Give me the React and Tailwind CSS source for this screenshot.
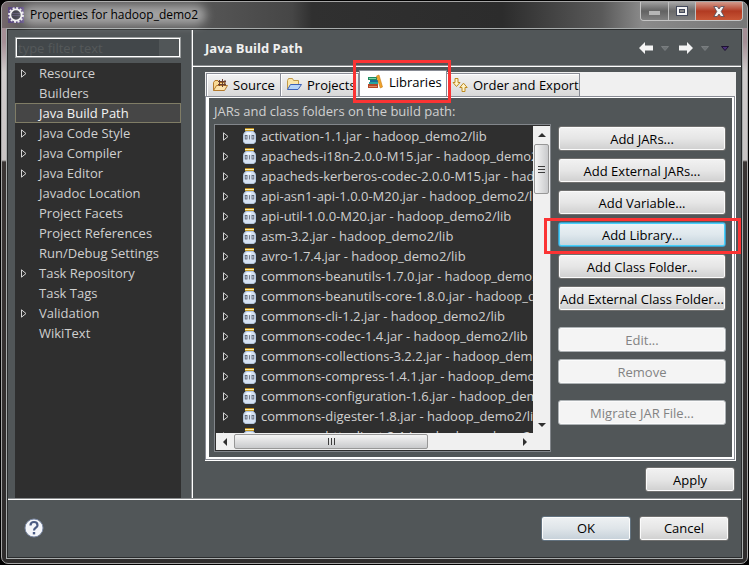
const categories = [
  { name: "Resource", expandable: true },
  { name: "Builders" },
  { name: "Java Build Path", selected: true },
  { name: "Java Code Style", expandable: true },
  { name: "Java Compiler", expandable: true },
  { name: "Java Editor", expandable: true },
  { name: "Javadoc Location" },
  { name: "Project Facets" },
  { name: "Project References" },
  { name: "Run/Debug Settings" },
  { name: "Task Repository", expandable: true },
  { name: "Task Tags" },
  { name: "Validation", expandable: true },
  { name: "WikiText" },
];

const jars = [
  "activation-1.1.jar",
  "apacheds-i18n-2.0.0-M15.jar",
  "apacheds-kerberos-codec-2.0.0-M15.jar",
  "api-asn1-api-1.0.0-M20.jar",
  "api-util-1.0.0-M20.jar",
  "asm-3.2.jar",
  "avro-1.7.4.jar",
  "commons-beanutils-1.7.0.jar",
  "commons-beanutils-core-1.8.0.jar",
  "commons-cli-1.2.jar",
  "commons-codec-1.4.jar",
  "commons-collections-3.2.2.jar",
  "commons-compress-1.4.1.jar",
  "commons-configuration-1.6.jar",
  "commons-digester-1.8.jar",
  "commons-httpclient-3.1.jar",
];

function Twisty() {
  return (
    <svg viewBox="0 0 6 9" className="h-[9px] w-[6px]" aria-hidden="true">
      <path d="M.5 .8V8.200L5 4.500Z" fill="none" stroke="#d4d4d4" />
    </svg>
  );
}

function JarIcon() {
  return (
    <svg viewBox="0 0 13 16" className="h-4 w-[13px] shrink-0" aria-hidden="true">
      <path d="M3 3.500h7c2 1 2.500 2.500 2.500 4.500v5c0 1.500-1 2.500-2.500 2.500H3C1.500 15.500.5 14.500.5 13V8C.5 6 1 4.500 3 3.500Z" fill="#d6e2f3" stroke="#b3c6df" />
      <path d="M4 4.500h4v2H3Z" fill="#f6faff" />
      <rect x="2" y="0" width="9" height="1" fill="#b98a1c" />
      <rect x="2" y="1" width="9" height="1" fill="#fff2b0" />
      <rect x="2" y="2" width="9" height="1" fill="#c79a22" />
      <g fill="none" stroke="#5a606e" strokeWidth=".8">
        <rect x="2.200" y="7.500" width="1.800" height="3.500" />
        <path d="M6.500 7.200v4.200" />
        <rect x="9" y="7.500" width="1.800" height="3.500" />
      </g>
    </svg>
  );
}

function EclipseIcon() {
  return (
    <svg viewBox="0 0 16 16" className="h-4 w-4" aria-hidden="true">
      <rect width="16" height="16" fill="#5c4a80" />
      <circle cx="8" cy="8" r="7" fill="none" stroke="#ececec" strokeWidth="1.800" strokeDasharray="2 1.665" />
      <circle cx="8" cy="8" r="5.600" fill="#45454f" stroke="#f2f2f2" strokeWidth="1.800" />
      <path d="M4 6.500h8M4 8.500h8" stroke="#66607c" strokeWidth=".8" />
    </svg>
  );
}

function SourceIcon() {
  return (
    <svg viewBox="0 0 16 16" className="h-4 w-4 shrink-0" aria-hidden="true">
      <path d="M1.500 13.500V5.500l1.500-2h3l1.500 2h5v2" fill="#f7d894" stroke="#b47a2c" />
      <path d="M1.500 13.500 4.500 8.500h11l-3 5Z" fill="#fbe3ae" stroke="#b47a2c" />
      <path d="M6 4.500h8M6 7.500h8M7.500 3v6M10.500 2v8M13 3v6" stroke="#6a4030" fill="none" />
    </svg>
  );
}

function ProjectsIcon() {
  return (
    <svg viewBox="0 0 16 16" className="h-4 w-4 shrink-0" aria-hidden="true">
      <path d="M1.500 12V3.500l1-2h4l1 2h5v4" fill="#fbe6a8" stroke="#c09a48" />
      <path d="M1.500 12.500 4.500 7.500h11l-3.500 5Z" fill="#b5d3f7" stroke="#3d62b8" />
    </svg>
  );
}

function LibrariesIcon() {
  return (
    <svg viewBox="0 0 16 16" className="h-4 w-4 shrink-0" aria-hidden="true">
      <rect x="1" y="3" width="9" height="3" fill="#1f8a5f" />
      <path d="M2 4.500h7" stroke="#7fd2a8" />
      <rect x="3" y="6" width="8" height="2" fill="#1a6f9a" />
      <rect x="2" y="8" width="9" height="2" fill="#27a5a0" />
      <rect x="1" y="10" width="10" height="4" fill="#b5482a" />
      <path d="M2 12.500h8" stroke="#e58a60" />
      <path d="m9.500 2 2.500-1 3.500 12-2.200 1Z" fill="#f1a42c" stroke="#c97a14" strokeWidth=".6" />
    </svg>
  );
}

function OrderIcon() {
  return (
    <svg viewBox="0 0 16 16" className="h-4 w-4 shrink-0" aria-hidden="true">
      <path d="M3 1.500h3v4h2L4.500 9.500 1 5.500h2Z" fill="#fff3c8" stroke="#bd8a22" />
      <path d="M10 14.500h3v-4h2.200L11.500 6.200 7.800 10.500H10Z" fill="#fff3c8" stroke="#bd8a22" />
    </svg>
  );
}

function NavArrow({ flip }) {
  return (
    <svg viewBox="0 0 14 12" className={flip ? "h-3 w-[14px] rotate-180" : "h-3 w-[14px]"} aria-hidden="true">
      <path d="M0 6 6 0V3.500H14V8.500H6V12Z" fill="#f4f4f4" />
    </svg>
  );
}

function Chevron({ fill, stroke }) {
  return (
    <svg viewBox="0 0 8 5" className="h-[5px] w-2" aria-hidden="true">
      <path d="M.5 .5h7L4 4.500Z" fill={fill} stroke={stroke} />
    </svg>
  );
}

function Button({ children, disabled, tone = "plain", className = "" }) {
  const tones = {
    plain: "border-[#70706f] bg-linear-to-b from-[#f2f2f2] from-0% via-[#e6e6e6] via-50% to-[#cfcfcf] text-black",
    primary: "border-[#62727f] bg-linear-to-b from-[#eef1f3] from-0% via-[#dfe5e9] via-50% to-[#c5d0d9] text-black",
    focus: "border-[#3c9cc8] bg-linear-to-b from-[#edf3f6] from-0% via-[#dfe8ed] via-50% to-[#c4d3dc] text-black shadow-[inset_0_0_0_1px_#48d0f8]",
    off: "border-[#adb2b5] bg-[#f4f4f4] text-[#838383]",
  };
  const look = disabled ? "off" : tone;
  return (
    <button
      type="button"
      disabled={disabled}
      className={`flex h-[25px] items-center justify-center rounded-[3px] border whitespace-nowrap ${look === "focus" ? "" : "shadow-[inset_0_0_0_1px_#fbfbfb]"} ${tones[look]} ${className}`}
    >
      {children}
    </button>
  );
}

function Tab({ icon, children, active, className }) {
  return (
    <button
      type="button"
      role="tab"
      aria-selected={!!active}
      className={
        active
          ? `relative z-10 flex h-[26px] items-center gap-[6px] border-x border-t border-[#898c95] bg-white pb-[3px] pl-[7px] text-black ${className}`
          : `flex h-[23px] items-center gap-[5px] border-t border-r border-[#898c95] bg-linear-to-b from-[#f3f3f3] to-[#d8d8d8] pl-[5px] text-black shadow-[inset_1px_1px_0_#ffffff] ${className}`
      }
    >
      {icon}
      <span className="whitespace-nowrap">{children}</span>
      {active && <span className="pointer-events-none absolute -top-[11px] -right-[5px] -bottom-[7px] -left-[7px] border-[3px] border-[#fb3434]" />}
    </button>
  );
}

function ScrollArrow({ d }) {
  return (
    <span className="flex h-[17px] w-[17px] shrink-0 items-center justify-center">
      <svg viewBox="0 0 8 8" className="h-2 w-2" aria-hidden="true">
        <path d={d} fill="#303030" />
      </svg>
    </span>
  );
}

export default function App() {
  return (
    <div className="flex h-screen flex-col bg-black p-px font-['Open_Sans','Noto_Sans',sans-serif] text-[13px] leading-5 text-[#d0d0d0]">
      <div className="flex min-h-0 flex-1 flex-col rounded-[7px] border border-[#a5a5a5] bg-[linear-gradient(180deg,#a58f96_0px,#a58f96_40px,#d0cccc_70px,#c8c4c4_158px,#3a3534_160px,#2e2c2c_100%)] px-1 pb-1">
        <header className="-mx-1 flex h-[26px] shrink-0 items-start justify-between rounded-t-[6px] bg-[linear-gradient(90deg,#75686c_0,#5c5a5b_20px,#565656_200px,#464646_290px,#303030_310px,#2c2c2c_500px,#5a5a5a_600px,#8a8a8a_640px,#777777_100%)] pl-[6px]">
          <div className="flex h-[26px] items-center gap-[6px]">
            <EclipseIcon />
            <h1 className="relative text-xs leading-5 text-black">
              <span className="absolute -inset-x-2 inset-y-0 rounded-full bg-white/45 blur-[5px]" />
              <span className="relative">Properties for hadoop_demo2</span>
            </h1>
          </div>
          <div className="mr-1 flex h-[19px] overflow-hidden rounded-b-[4px] border border-t-0 border-[#c4c4c4]">
            <button type="button" aria-label="Minimize" className="flex w-7 items-center justify-center border-r border-[#c0c0c0] bg-linear-to-b from-[#a0a0a0] from-0% via-[#626262] via-50% to-[#808080]">
              <span className="mt-1 h-1 w-[11px] bg-[#b5b5b5]" />
            </button>
            <button type="button" aria-label="Maximize" className="flex w-[27px] items-center justify-center border-r border-[#c0c0c0] bg-linear-to-b from-[#a8a8a8] from-0% via-[#6a6a6a] via-50% to-[#808080]">
              <svg viewBox="0 0 12 10" className="h-[10px] w-3" aria-hidden="true">
                <rect x=".5" y=".5" width="11" height="9" fill="#f4f4f4" stroke="#444a5c" />
                <rect x="3.500" y="3.500" width="5" height="3" fill="#888" stroke="#444a5c" />
              </svg>
            </button>
            <button type="button" aria-label="Close" className="flex w-[46px] items-center justify-center bg-linear-to-b from-[#d29a8c] from-0% via-[#b23a22] via-50% to-[#c85636]">
              <svg viewBox="0 0 12 11" className="h-[11px] w-3" aria-hidden="true">
                <path d="M.8 .5h3.400L6 3 7.800 .5h3.400L8.200 5.500l3 5H7.800L6 8l-1.800 2.500H.8l3-5Z" fill="#f6f6f6" stroke="#4c4c5c" strokeWidth=".8" />
              </svg>
            </button>
          </div>
        </header>

        <div className="flex min-h-0 flex-1 flex-col border border-[#a8acac] bg-[#515658]">
          <div className="flex min-h-0 flex-1 flex-col border border-[#2a2c2d]">
            <div className="flex min-h-0 flex-1">
              <aside className="flex w-[185px] shrink-0 flex-col gap-[5px] border-r border-white pt-[7px] pr-[11px] pl-[7px] shadow-[inset_-1px_0_0_#8a8d8f]">
                <div className="flex h-[21px] shrink-0 border border-[#9a9d9e] shadow-[inset_0_0_0_1px_#ffffff]">
                  <input
                    type="text"
                    aria-label="Filter"
                    placeholder="type filter text"
                    className="m-px w-[142px] bg-[#42474a] px-px text-[13px] text-[#d0d0d0] outline-none placeholder:text-[#55595a]"
                  />
                </div>
                <ul className="min-h-0 flex-1 overflow-hidden bg-[#2f2f2f]">
                  {categories.map((c) => (
                    <li
                      key={c.name}
                      className={
                        c.selected
                          ? "flex h-5 items-center border border-[#807d66] bg-[#464646] px-[5px] text-[#f4f4f4]"
                          : "flex h-5 items-center px-[6px]"
                      }
                    >
                      <span className="flex w-[18px] shrink-0">{c.expandable && <Twisty />}</span>
                      <span className="whitespace-nowrap">{c.name}</span>
                    </li>
                  ))}
                </ul>
              </aside>

              <main className="flex min-w-0 flex-1 flex-col">
                <div className="flex h-[37px] shrink-0 items-center justify-between border-b border-white pr-3 pl-3 shadow-[inset_0_-1px_0_#8a8d8f]">
                  <h2 className="font-bold text-[#f0f0f0]">Java Build Path</h2>
                  <nav className="flex items-center gap-2">
                    <button type="button" aria-label="Back"><NavArrow /></button>
                    <button type="button" aria-label="Back history"><Chevron fill="#6f7476" stroke="#7a7e80" /></button>
                    <button type="button" aria-label="Forward" className="pl-[2px]"><NavArrow flip /></button>
                    <button type="button" aria-label="Forward history"><Chevron fill="#6f7476" stroke="#7a7e80" /></button>
                    <button type="button" aria-label="Menu" className="pl-1"><Chevron fill="#4a2f7a" stroke="#1d1230" /></button>
                  </nav>
                </div>

                <div className="mt-[5px] mr-[5px] ml-3 flex min-h-0 flex-1 flex-col">
                  <div role="tablist" className="flex h-6 shrink-0 items-end bg-[#f0f0f0] pl-px">
                    <Tab icon={<SourceIcon />} className="w-[75px] border-l">Source</Tab>
                    <Tab icon={<ProjectsIcon />} className="w-[78px]">Projects</Tab>
                    <Tab icon={<LibrariesIcon />} active className="w-[88px]">Libraries</Tab>
                    <Tab icon={<OrderIcon />} className="w-[133px]">Order and Export</Tab>
                  </div>
                  <div className="flex min-h-0 flex-1 flex-col border-r border-b border-white">
                    <div className="flex min-h-0 flex-1 flex-col border border-[#898c95]">
                      <div className="flex min-h-0 flex-1 flex-col border-t border-r-2 border-b-2 border-l-3 border-white pt-[3px] pr-[6px] pb-[5px] pl-[5px]">
                        <p>JARs and class folders on the build path:</p>
                        <div className="mt-[3px] flex min-h-0 flex-1 gap-[7px]">
                          <div className="flex min-w-0 flex-1 flex-col border border-[#82868b] bg-[#2f2f2f] pt-px pb-px pl-px">
                            <div className="flex min-h-0 flex-1">
                              <ul className="min-h-0 min-w-0 flex-1 overflow-hidden">
                                {jars.map((jar) => (
                                  <li key={jar} className="flex h-5 items-center pl-[7px]">
                                    <span className="flex w-5 shrink-0"><Twisty /></span>
                                    <JarIcon />
                                    <span className="pl-[5px] whitespace-nowrap">{jar} - hadoop_demo2/lib</span>
                                  </li>
                                ))}
                              </ul>
                              <div className="flex w-[17px] shrink-0 flex-col bg-[#f0f0f0]">
                                <ScrollArrow d="M0 6 4 2 8 6Z" />
                                <span className="mx-px mt-px flex h-[50px] flex-col items-center justify-center gap-[2px] rounded-[2px] border border-[#979797] bg-linear-to-r from-[#f5f5f5] to-[#c9cacc]">
                                  <i className="h-px w-[7px] bg-[#3c3c3c]" />
                                  <i className="h-px w-[7px] bg-[#3c3c3c]" />
                                  <i className="h-px w-[7px] bg-[#3c3c3c]" />
                                </span>
                                <span className="flex-1" />
                                <ScrollArrow d="M0 2h8L4 6Z" />
                              </div>
                            </div>
                            <div className="flex h-[17px] shrink-0 bg-[#f0f0f0] pr-[17px]">
                              <ScrollArrow d="M6 0v8L2 4Z" />
                              <span className="my-px ml-px flex w-[194px] items-center justify-center gap-[2px] rounded-[2px] border border-[#979797] bg-linear-to-b from-[#f5f5f5] to-[#c9cacc]">
                                <i className="h-[7px] w-px bg-[#3c3c3c]" />
                                <i className="h-[7px] w-px bg-[#3c3c3c]" />
                                <i className="h-[7px] w-px bg-[#3c3c3c]" />
                              </span>
                              <span className="flex-1" />
                              <ScrollArrow d="M2 0v8L6 4Z" />
                            </div>
                          </div>
                          <div className="flex w-[168px] shrink-0 flex-col gap-[7px] pt-[2px]">
                            <Button>Add JARs...</Button>
                            <Button>Add External JARs...</Button>
                            <Button>Add Variable...</Button>
                            <div className="relative flex flex-col">
                              <Button tone="focus">Add Library...</Button>
                              <span className="pointer-events-none absolute -top-1 -right-[15px] -bottom-[7px] -left-[14px] z-10 border-[3px] border-[#fb3434]" />
                            </div>
                            <Button>Add Class Folder...</Button>
                            <Button>Add External Class Folder...</Button>
                            <Button disabled className="mt-[9px]">Edit...</Button>
                            <Button disabled>Remove</Button>
                            <Button disabled className="mt-[9px]">Migrate JAR File...</Button>
                          </div>
                        </div>
                      </div>
                    </div>
                  </div>
                </div>
                <div className="flex justify-end pt-[6px] pr-[6px] pb-[6px]">
                  <Button className="w-[90px]">Apply</Button>
                </div>
              </main>
            </div>

            <footer className="flex h-[59px] shrink-0 items-center justify-between border-t border-[#8a8d8f] pr-3 pl-4 shadow-[inset_0_1px_0_#ffffff]">
              <button type="button" aria-label="Help">
                <svg viewBox="0 0 20 20" className="h-5 w-5" aria-hidden="true">
                  <circle cx="10" cy="10" r="9" fill="#f4f6fa" stroke="#7c8aa6" />
                  <path d="M6.500 7.500C6.500 5 8 4 10 4s3.500 1.200 3.500 3.200c0 2.300-3.500 2.600-3.500 5.300" fill="none" stroke="#4b5c84" strokeWidth="2.200" />
                  <rect x="8.800" y="14" width="2.400" height="2.400" fill="#4b5c84" />
                </svg>
              </button>
              <div className="flex gap-2">
                <Button tone="primary" className="w-[90px]">OK</Button>
                <Button className="w-[90px]">Cancel</Button>
              </div>
            </footer>
          </div>
        </div>
      </div>
    </div>
  );
}
